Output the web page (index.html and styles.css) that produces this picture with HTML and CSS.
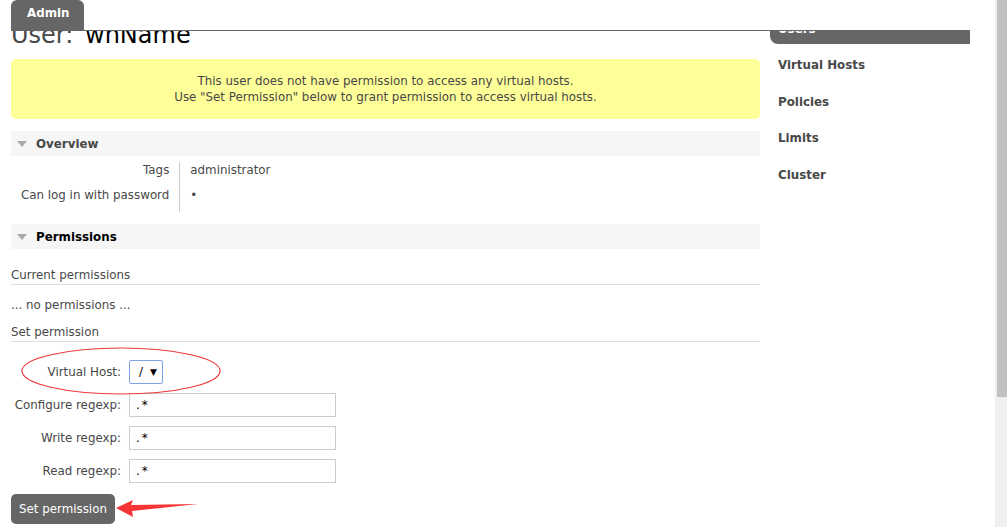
FILE: index.html
```html
<!DOCTYPE html>
<html>
<head>
<meta charset="utf-8">
<title>RabbitMQ Management</title>
<link rel="stylesheet" href="styles.css">
</head>
<body>
<header class="topbar">
  <div class="topbar-inner">
    <div class="tab-admin">Admin</div>
  </div>
</header>

<div class="page">
  <main class="main">
    <h1 class="title">User: <span class="title-name">whName</span></h1>

    <div class="warning">
      <p>This user does not have permission to access any virtual hosts.</p>
      <p>Use "Set Permission" below to grant permission to access virtual hosts.</p>
    </div>

    <section class="section">
      <h2 class="section-head"><span class="tri"></span>Overview</h2>
      <table class="facts">
        <tr><th>Tags</th><td>administrator</td></tr>
        <tr><th>Can log in with password</th><td>•</td></tr>
      </table>
    </section>

    <section class="section">
      <h2 class="section-head section-head-active"><span class="tri"></span>Permissions</h2>
      <h3 class="subhead first">Current permissions</h3>
      <p class="plain">... no permissions ...</p>
      <h3 class="subhead">Set permission</h3>
      <form class="perm-form">
        <label class="lbl">Virtual Host:</label>
        <div class="ctl"><span class="select"><span class="sel-val">/</span><span class="sel-arrow">▼</span></span></div>
        <label class="lbl">Configure regexp:</label>
        <div class="ctl"><span class="input">.*</span></div>
        <label class="lbl">Write regexp:</label>
        <div class="ctl"><span class="input">.*</span></div>
        <label class="lbl">Read regexp:</label>
        <div class="ctl"><span class="input">.*</span></div>
      </form>
      <button class="btn" type="button">Set permission</button>
    </section>
  </main>

  <nav class="sidenav">
    <ul>
      <li class="nav-item nav-selected">Users</li>
      <li class="nav-item">Virtual Hosts</li>
      <li class="nav-item">Policies</li>
      <li class="nav-item">Limits</li>
      <li class="nav-item">Cluster</li>
    </ul>
  </nav>
</div>

<svg class="annot" width="1007" height="527" viewBox="0 0 1007 527">
  <ellipse cx="121" cy="371" rx="99" ry="23" fill="none" stroke="#ef3a3a" stroke-width="1.2"/>
  <polygon points="116,508 133,500 131,505 198,504 132,511 133,517" fill="#f53535"/>
</svg>

<div class="scrollbar"><div class="scroll-thumb"></div></div>
</body>
</html>
```

FILE: styles.css
```css
html, body {
  margin: 0;
  padding: 0;
  background: #fff;
}
body {
  font-family: "DejaVu Sans", Verdana, sans-serif;
  font-size: 11.85px;
  line-height: 14px;
  color: #484848;
  overflow: hidden;
  height: 527px;
}

/* fixed header */
.topbar {
  position: fixed;
  top: 0;
  left: 0;
  right: 0;
  height: 31px;
  background: #fff;
  z-index: 5;
}
.topbar-inner {
  margin-left: 11px;
  width: 959px;
  height: 30px;
  border-bottom: 1px solid #666;
  display: flex;
  align-items: flex-end;
}
.tab-admin {
  background: #666;
  color: #fff;
  font-weight: bold;
  height: 30px;
  box-sizing: border-box;
  padding: 6px 15px 0 16px;
  border-radius: 6px 6px 0 0;
}

.page {
  display: flex;
  gap: 10px;
  padding-left: 11px;
}
.main {
  width: 749px;
}

.title {
  margin: 21px 0 0;
  font-size: 24px;
  line-height: 28px;
  font-weight: normal;
  color: #484848;
}
.title-name {
  color: #000;
  margin-left: 4px;
}

.warning {
  margin-top: 10px;
  background: #ffff99;
  border-radius: 5px;
  padding: 14px;
  text-align: center;
  line-height: 16px;
  color: #484848;
}
.warning p { margin: 0; }

.section-head {
  margin: 12px 0 0;
  height: 25px;
  box-sizing: border-box;
  padding-top: 1px;
  background: #f6f6f6;
  font-size: 11.85px;
  font-weight: bold;
  color: #484848;
  display: flex;
  align-items: center;
  padding-left: 6px;
}
.section-head-active { color: #000; }
.tri {
  width: 0;
  height: 0;
  border-left: 5px solid transparent;
  border-right: 5px solid transparent;
  border-top: 6px solid #aaa;
  margin-right: 9px;
}

.facts {
  margin-top: 6px;
  border-collapse: collapse;
  border-spacing: 0;
}
.facts th {
  font-weight: normal;
  text-align: right;
  padding: 1px 10px 10px 10px;
  border-right: 1px solid #ccc;
  color: #484848;
}
.facts td {
  padding: 1px 10px 10px 10px;
  color: #484848;
}

.subhead {
  margin: 18px 0 0;
  font-size: 11.85px;
  font-weight: normal;
  padding: 1px 0 2px;
  border-bottom: 1px solid #ddd;
  color: #484848;
}
.plain {
  margin: 13px 0 0;
}
.plain + .subhead {
  margin-top: 12px;
}

.perm-form {
  margin-top: 18px;
  display: grid;
  grid-template-columns: 110px auto;
  column-gap: 8px;
  row-gap: 9px;
  align-items: center;
}
.lbl {
  text-align: right;
}
.ctl { display: flex; }
.select {
  width: 34px;
  height: 24px;
  box-sizing: border-box;
  border: 1px solid #7ba3e3;
  border-radius: 2px;
  display: flex;
  align-items: center;
  padding-left: 9px;
  color: #000;
}
.sel-arrow {
  font-size: 9px;
  margin-left: 7px;
}
.input {
  width: 207px;
  height: 24px;
  box-sizing: border-box;
  border: 1px solid #ccc;
  display: flex;
  align-items: center;
  padding-left: 6px;
  font-family: "DejaVu Sans", Verdana, sans-serif;
  font-size: 12px;
  letter-spacing: 2px;
  color: #000;
}

.btn {
  margin-top: 11px;
  height: 30px;
  padding: 0 8px;
  border: none;
  border-radius: 5px;
  background: #666;
  color: #fff;
  font-family: "DejaVu Sans", Verdana, sans-serif;
  font-size: 11.85px;
}

.sidenav {
  width: 200px;
}
.sidenav ul {
  list-style: none;
  margin: 7px 0 0;
  padding: 0;
}
.nav-item {
  height: 36.7px;
  box-sizing: border-box;
  padding: 14px 0 0 8px;
  font-weight: bold;
  color: #484848;
}
.nav-selected {
  height: 37px;
  background: #666;
  color: #fff;
  border-radius: 0 0 0 8px;
  padding-top: 15px;
}

.annot {
  position: absolute;
  left: 0;
  top: 0;
  pointer-events: none;
  z-index: 3;
}

.scrollbar {
  position: fixed;
  top: 0;
  right: 0;
  width: 12px;
  height: 527px;
  background: #f0f0f0;
  z-index: 6;
}
.scroll-thumb {
  margin-left: 2px;
  width: 10px;
  height: 397px;
  background: #c1c1c1;
}
```
